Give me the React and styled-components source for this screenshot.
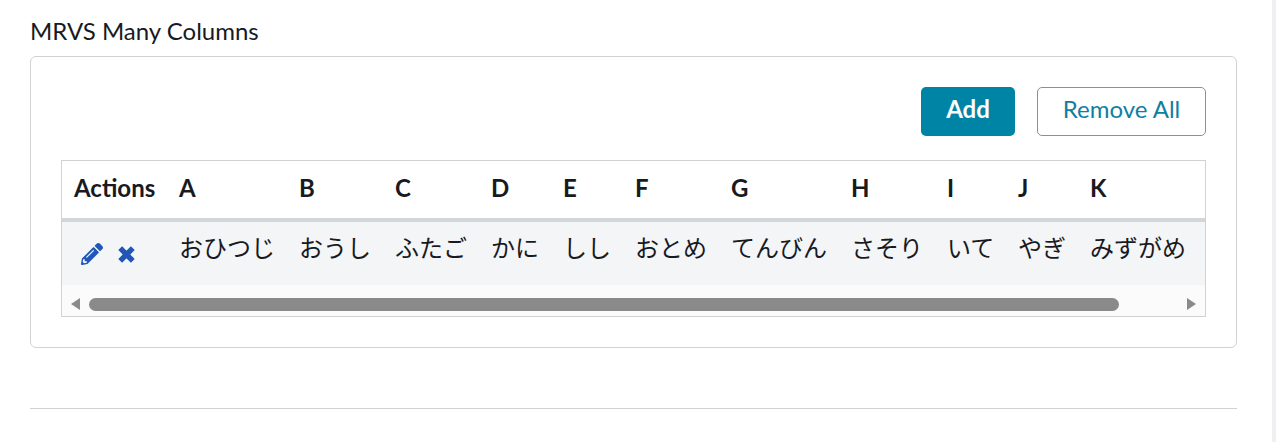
import React from 'react'
import styled, { createGlobalStyle } from 'styled-components'
import { FaPencilAlt } from 'react-icons/fa'

const GlobalStyle = createGlobalStyle`
  html, body {
    margin: 0;
    padding: 0;
    height: 442px;
    overflow: hidden;
    background: #fff;
  }
  body {
    font-family: Lato, "Noto Sans CJK JP", sans-serif;
    color: #181a1f;
  }
`
const Page = styled.div`
  display: flex;
  height: 442px;
`
const Content = styled.div`
  flex: 1;
  padding: 17px 35px 0 30px;
`
const PageScrollbar = styled.div`
  width: 4px;
  background: #eef0f3;
`
const Label = styled.div`
  font-size: 24px;
  line-height: 28px;
  height: 39px;
`
const Card = styled.div`
  height: 292px;
  box-sizing: border-box;
  border: 1px solid #cfd3d6;
  border-radius: 6px;
  padding: 30px;
`
const Toolbar = styled.div`
  display: flex;
  justify-content: flex-end;
  gap: 22px;
  margin-bottom: 24px;
`
const Button = styled.button`
  height: 49px;
  box-sizing: border-box;
  border-radius: 5px;
  font-family: inherit;
  font-size: 24px;
  padding: 0 0 6px;
  width: ${props => props.width}px;
  font-weight: ${props => (props.primary ? 700 : 400)};
  color: ${props => (props.primary ? '#fff' : '#0f7fa3')};
  background: ${props => (props.primary ? '#0084a6' : '#fff')};
  border: ${props => (props.primary ? 'none' : '1px solid #8a9094')};
`
const TableBox = styled.div`
  border: 1px solid #cfd3d6;
  overflow: hidden;
`
const Table = styled.table`
  border-collapse: collapse;
  table-layout: fixed;
  width: 1143px;
`
const HeadCell = styled.th`
  height: 59px;
  padding: 0 0 4px 12px;
  text-align: left;
  font-size: 24px;
  font-weight: 700;
  box-sizing: border-box;
  border-bottom: 4px solid #d0d6da;
  width: ${props => props.width}px;
`
const Row = styled.tr`
  background: #f3f5f7;
`
const Cell = styled.td`
  height: 65px;
  padding: 0 0 15px 12px;
  font-size: 24px;
  font-weight: 400;
  white-space: nowrap;
  box-sizing: border-box;
`
const ActionsWrap = styled.div`
  display: flex;
  align-items: center;
  gap: 15px;
  padding: 15px 0 0 7px;
  color: #1f56b8;
`
const CloseIcon = styled.svg`
  width: 17px;
  height: 17px;
  margin-top: 1px;
  fill: none;
  stroke: currentColor;
  stroke-width: 5.4;
`
const Scrollbar = styled.div`
  height: 31px;
  box-sizing: border-box;
  background: #fbfbfb;
  display: flex;
  align-items: center;
  padding: 7px 9px 0;
`
const Arrow = styled.div`
  width: 0;
  height: 0;
  border-top: 6px solid transparent;
  border-bottom: 6px solid transparent;
  border-right: ${props => (props.right ? 'none' : '9px solid #8a8a8a')};
  border-left: ${props => (props.right ? '9px solid #8a8a8a' : 'none')};
`
const Track = styled.div`
  flex: 1;
  padding: 0 68px 0 9px;
`
const Thumb = styled.div`
  height: 13px;
  border-radius: 7px;
  background: #8a8a8a;
`
const Divider = styled.div`
  margin-top: 60px;
  border-top: 1px solid #cfd3d6;
`

const columns = [
  ['A', 'おひつじ', 120],
  ['B', 'おうし', 96],
  ['C', 'ふたご', 96],
  ['D', 'かに', 72],
  ['E', 'しし', 72],
  ['F', 'おとめ', 96],
  ['G', 'てんびん', 120],
  ['H', 'さそり', 96],
  ['I', 'いて', 71],
  ['J', 'やぎ', 72],
  ['K', 'みずがめ', 127],
]

const App = () => {
  return (
    <Page>
      <GlobalStyle />
      <Content>
        <Label>MRVS Many Columns</Label>
        <Card>
          <Toolbar>
            <Button primary width={94}>Add</Button>
            <Button width={169}>Remove All</Button>
          </Toolbar>
          <TableBox>
            <Table>
              <thead>
                <tr>
                  <HeadCell width={105}>Actions</HeadCell>
                  {columns.map(([name, , width]) => (
                    <HeadCell key={name} width={width}>{name}</HeadCell>
                  ))}
                </tr>
              </thead>
              <tbody>
                <Row>
                  <Cell>
                    <ActionsWrap>
                      <FaPencilAlt size={22} />
                      <CloseIcon viewBox="0 0 17 17">
                        <path d="M2.2 2.2L14.8 14.8M14.8 2.2L2.2 14.8" />
                      </CloseIcon>
                    </ActionsWrap>
                  </Cell>
                  {columns.map(([name, value]) => (
                    <Cell key={name}>{value}</Cell>
                  ))}
                </Row>
              </tbody>
            </Table>
            <Scrollbar>
              <Arrow />
              <Track><Thumb /></Track>
              <Arrow right />
            </Scrollbar>
          </TableBox>
        </Card>
        <Divider />
      </Content>
      <PageScrollbar />
    </Page>
  )
}

export default App
